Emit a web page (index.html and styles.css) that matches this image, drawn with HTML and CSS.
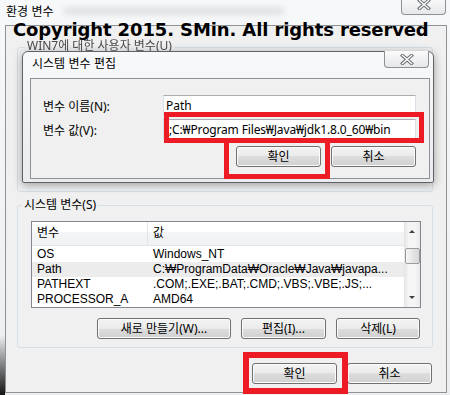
FILE: index.html
```html
<!DOCTYPE html>
<html lang="ko">
<head>
  <meta charset="UTF-8">
  <meta name="viewport" content="width=device-width, initial-scale=1">
  <title>환경 변수</title>
  <link rel="stylesheet" href="styles.css">
</head>
<body>

  <div class="win">
    <div class="titlebar">
      <span class="title">환경 변수</span>
      <span class="glass-smear"></span>
      <div class="close-btn outer-close">
        <svg width="14" height="11" viewBox="0 0 14 11">
          <path d="M2.5 1.5 L11.5 9.5 M11.5 1.5 L2.5 9.5" stroke="#6b6e72" stroke-width="3.4" stroke-linecap="square"/>
          <path d="M2.5 1.5 L11.5 9.5 M11.5 1.5 L2.5 9.5" stroke="#fff" stroke-width="1.4" stroke-linecap="square"/>
        </svg>
      </div>
    </div>

    <div class="client">
      <div class="group user-group">
        <div class="group-title">WIN7에 대한 사용자 변수(U)</div>
      </div>

      <div class="group sys-group">
        <div class="group-title">시스템 변수(S)</div>
        <div class="listview">
          <div class="lv-main">
            <div class="lv-head">
              <div class="col1">변수</div>
              <div class="col2">값</div>
            </div>
            <div class="lv-row first"><div class="col1">OS</div><div class="col2">Windows_NT</div></div>
            <div class="lv-row sel"><div class="col1">Path</div><div class="col2">C:₩ProgramData₩Oracle₩Java₩javapa...</div></div>
            <div class="lv-row"><div class="col1">PATHEXT</div><div class="col2">.COM;.EXE;.BAT;.CMD;.VBS;.VBE;.JS;...</div></div>
            <div class="lv-row"><div class="col1">PROCESSOR_A</div><div class="col2">AMD64</div></div>
          </div>
          <div class="vscroll">
            <div class="sb-arrow sb-up"></div>
            <div class="thumb"></div>
            <div class="track"></div>
            <div class="sb-arrow sb-down"></div>
          </div>
        </div>
        <div class="btn-row sys-btns">
          <button class="btn btn-new">새로 만들기(W)...</button>
          <button class="btn btn-edit">편집(I)...</button>
          <button class="btn btn-del">삭제(L)</button>
        </div>
      </div>

      <div class="btn-row main-btns">
        <button class="btn btn-ok">확인</button>
        <button class="btn btn-cancel">취소</button>
      </div>
    </div>

    <!-- 편집 대화상자 (부모 창 위에 떠 있음) -->
    <div class="dialog">
      <div class="dlg-titlebar">
        <span class="dlg-title">시스템 변수 편집</span>
        <div class="close-btn dlg-close">
          <svg width="14" height="11" viewBox="0 0 14 11">
            <path d="M2.5 1.5 L11.5 9.5 M11.5 1.5 L2.5 9.5" stroke="#6b6e72" stroke-width="3.4" stroke-linecap="square"/>
            <path d="M2.5 1.5 L11.5 9.5 M11.5 1.5 L2.5 9.5" stroke="#fff" stroke-width="1.4" stroke-linecap="square"/>
          </svg>
        </div>
      </div>
      <div class="dlg-client">
        <div class="field">
          <label>변수 이름(N):</label>
          <div class="textbox">Path</div>
        </div>
        <div class="field">
          <label>변수 값(V):</label>
          <div class="textbox scrolled">;C:₩Program Files₩Java₩jdk1.8.0_60₩bin</div>
        </div>
        <div class="btn-row dlg-btns">
          <button class="btn btn-ok">확인</button>
          <button class="btn btn-cancel">취소</button>
        </div>
      </div>
    </div>

    <div class="copyright">Copyright 2015. SMin. All rights reserved</div>

    <!-- 빨간 표시 -->
    <div class="mark mark-value"></div>
    <div class="mark mark-ok"></div>
    <div class="mark mark-main"></div>
  </div>

</body>
</html>
```

FILE: styles.css
```css
* {
  box-sizing: border-box;
}
html, body {
  margin: 0;
}
body {
  width: 450px;
  height: 395px;
  overflow: hidden;
  font-family: "Noto Sans", "Noto Sans CJK KR", sans-serif;
  font-size: 12px;
  color: #000;
}

.win {
  position: relative;
  width: 450px;
  height: 395px;
  background:
    linear-gradient(to bottom, rgba(20, 20, 20, 0) 335px, #141414 395px) left top / 5px 100% no-repeat,
    linear-gradient(to bottom, #f7f8f9, #eceef0);
}

.titlebar {
  display: flex;
  align-items: flex-start;
  height: 25px;
}
.title {
  padding: 4px 0 0 6px;
  line-height: 14px;
  font-family: "Noto Sans CJK KR", sans-serif;
}
.glass-smear {
  width: 220px;
  height: 6px;
  margin: 8px 0 0 10px;
  background: #d9dbde;
  filter: blur(3px);
}

.close-btn {
  width: 45px;
  height: 17px;
  display: flex;
  justify-content: center;
  align-items: center;
  border: 1px solid #8d9196;
  border-top: none;
  border-radius: 0 0 4px 4px;
  background: linear-gradient(#fbfbfb, #e6e7e9);
}
.close-btn svg {
  display: block;
}
.outer-close {
  margin: -2px 4px 0 auto;
  padding-bottom: 3px;
}

/* 부모 창 클라이언트 영역 */
.client {
  margin: 0 3px 0 5px;
  height: 368px;
  border: 1px solid #8e9297;
  background: #f0f0f0;
  padding: 0 13px 0 11px;
  display: flex;
  flex-direction: column;
}
.group {
  border: 1px solid #d5dfe5;
  border-radius: 3px;
}
.group-title {
  width: fit-content;
  margin: -8px 0 0 4px;
  padding: 0 2px;
  line-height: 14px;
  background: #f0f0f0;
  font-family: "Noto Sans", "Noto Sans CJK KR", sans-serif;
}
.user-group {
  margin-top: 21px;
  height: 145px;
}
/* 대화상자에 가려 윗부분만 보임 */
.user-group .group-title {
  margin: -6px 0 0 7px;
  line-height: 8px;
  color: #4a4a4a;
  filter: blur(0.4px);
}
.sys-group {
  margin-top: 13px;
  height: 143px;
}

.listview {
  margin: 9px 11px 0 13px;
  height: 87px;
  border: 1px solid #828790;
  background: #fff;
  display: flex;
  font-family: "Liberation Sans", "Noto Sans CJK KR", sans-serif;
  font-size: 12px;
}
.lv-main {
  flex: 1;
  overflow: hidden;
}
.lv-head {
  display: flex;
  height: 24px;
  line-height: 23px;
  border-bottom: 1px solid #e5e5e5;
  background: linear-gradient(#ffffff 42%, #f4f5f7 42%, #f1f2f4);
}
.lv-head .col1 {
  border-right: 1px solid #e2e4e7;
}
.col1 {
  flex: none;
  width: 116px;
  padding-left: 5px;
  white-space: nowrap;
  overflow: hidden;
}
.col2 {
  padding-left: 5px;
  white-space: nowrap;
}
.lv-row {
  display: flex;
  height: 15px;
  line-height: 15px;
}
.lv-row.first {
  margin-top: 1px;
}
.lv-row.sel {
  background: #ececec;
}

.vscroll {
  flex: none;
  width: 16px;
  display: flex;
  flex-direction: column;
  align-items: center;
  background: linear-gradient(to right, #e4e4e4, #f5f5f5 30%, #f5f5f5 70%, #e9e9e9);
}
.sb-arrow {
  width: 100%;
  height: 19px;
  display: flex;
  justify-content: center;
  align-items: center;
}
.sb-arrow::before {
  content: "";
  border-left: 3px solid transparent;
  border-right: 3px solid transparent;
}
.sb-up::before {
  border-bottom: 3px solid #404040;
}
.sb-down::before {
  border-top: 3px solid #404040;
}
.thumb {
  margin-top: 7px;
  width: 15px;
  height: 16px;
  border: 1px solid #9b9b9b;
  border-radius: 2px;
  background: linear-gradient(to right, #f6f6f6, #e6e6e6 50%, #d6d6d6);
}
.track {
  flex: 1;
}

/* 버튼 */
.btn-row {
  display: flex;
  justify-content: flex-end;
  gap: 10px;
}
.btn {
  height: 21px;
  padding: 0;
  border: 1px solid #707070;
  border-radius: 3px;
  background: linear-gradient(#f3f3f3, #ebebeb 50%, #dddddd 50%, #d0d0d0);
  box-shadow: inset 0 0 0 1px #fbfbfb;
  font-family: "Noto Sans", "Noto Sans CJK KR", sans-serif;
  font-size: 12px;
  line-height: 19px;
  color: #000;
}
.sys-btns {
  margin-top: 10px;
  padding-right: 12px;
}
.btn-new {
  width: 134px;
}
.btn-edit {
  width: 85px;
}
.btn-del {
  width: 84px;
}
.main-btns {
  margin-top: 15px;
  padding-right: 1px;
}
.btn-ok, .btn-cancel {
  width: 85px;
}

/* 편집 대화상자 */
.dialog {
  position: absolute;
  left: 22px;
  top: 51px;
  width: 412px;
  height: 132px;
  border: 1px solid #5f6368;
  border-radius: 6px 6px 2px 2px;
  background: linear-gradient(#f8f9fa, #e9ebee);
  box-shadow: 0 2px 10px rgba(0, 0, 0, 0.35);
  display: flex;
  flex-direction: column;
}
.dlg-titlebar {
  flex: none;
  display: flex;
  align-items: flex-start;
  height: 26px;
}
.dlg-title {
  padding: 4px 0 0 9px;
  line-height: 14px;
  font-family: "Noto Sans CJK KR", sans-serif;
}
.dlg-close {
  margin: -1px 4px 0 auto;
}
.dlg-client {
  margin: 0 3px 0 7px;
  height: 101px;
  border: 1px solid #8e9297;
  background: #f0f0f0;
  padding: 16px 13px 0 12px;
  display: flex;
  flex-direction: column;
  gap: 3px;
}
.field {
  display: flex;
  align-items: center;
  height: 21px;
}
.field label {
  flex: none;
  width: 120px;
  font-family: "Noto Sans", "Noto Sans CJK KR", sans-serif;
}
.textbox {
  flex: 1;
  height: 21px;
  padding-left: 2px;
  line-height: 19px;
  background: #fff;
  border: 1px solid #dbdfe6;
  border-top-color: #abadb3;
  white-space: nowrap;
  overflow: hidden;
}
.textbox.scrolled {
  padding-left: 5px;
  letter-spacing: -0.15px;
}
.dlg-btns {
  margin-top: 3px;
}

.copyright {
  position: absolute;
  left: 13px;
  top: 21px;
  font-family: "DejaVu Sans", sans-serif;
  font-weight: bold;
  font-size: 18px;
  line-height: 18px;
  letter-spacing: -0.12px;
  white-space: nowrap;
}

.mark {
  position: absolute;
  border: 5px solid #ed1c24;
}
.mark-value {
  left: 164px;
  top: 112px;
  width: 260px;
  height: 31px;
}
.mark-ok {
  left: 224px;
  top: 138px;
  width: 106px;
  height: 41px;
}
.mark-main {
  left: 243px;
  top: 352px;
  width: 105px;
  height: 42px;
  border-width: 6px;
}
```
